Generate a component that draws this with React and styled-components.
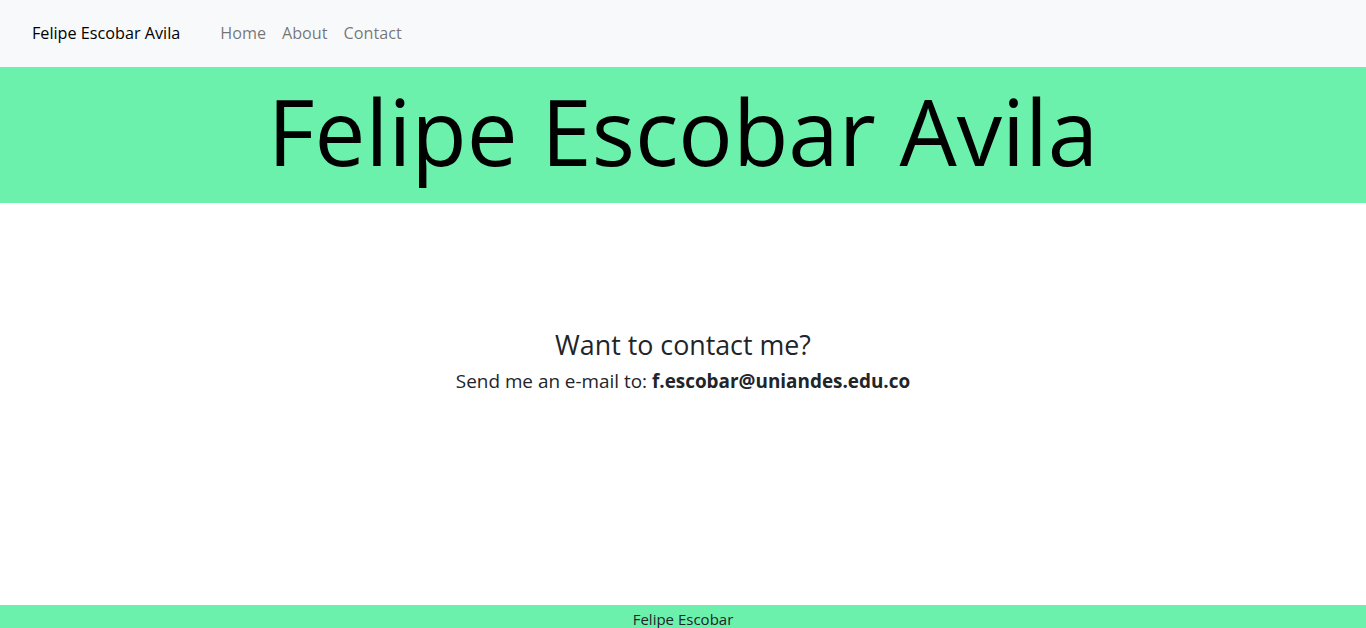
import React from "react";
import styled, { createGlobalStyle } from "styled-components";

const GlobalStyle = createGlobalStyle`
  body {
    margin: 0;
    font-family: "Open Sans", "Noto Sans", sans-serif;
    color: #212529;
    background-color: #fff;
  }
`;

const Page = styled.div`
  display: flex;
  flex-direction: column;
  min-height: 100vh;
`;

const Navbar = styled.nav`
  display: flex;
  align-items: center;
  height: 67px;
  padding: 0 32px 2px;
  box-sizing: border-box;
  background-color: #f8f9fa;
`;

const Brand = styled.a`
  font-size: 16.2px;
  color: #000;
  margin-right: 32px;
  text-decoration: none;
`;

const NavLink = styled.a`
  font-size: 16.2px;
  color: rgba(0, 0, 0, 0.55);
  padding: 0 8px;
  text-decoration: none;
`;

const Banner = styled.header`
  display: flex;
  justify-content: center;
  align-items: center;
  height: 136px;
  padding-bottom: 8px;
  box-sizing: border-box;
  background-color: #6cf1ac;
`;

const BannerTitle = styled.h1`
  margin: 0;
  font-weight: 400;
  font-size: 90.7px;
  line-height: 1;
  color: #000;
`;

const Main = styled.main`
  flex: 1;
  display: flex;
  flex-direction: column;
  align-items: center;
  padding-top: 126px;
`;

const Heading = styled.h3`
  margin: 0 0 7px;
  font-weight: 400;
  font-size: 26.8px;
  line-height: 1.2;
`;

const Lead = styled.p`
  margin: 0;
  font-size: 18.9px;
  font-weight: 400;

  strong {
    font-weight: 700;
  }
`;

const Footer = styled.footer`
  height: 23px;
  background-color: #6cf1ac;
  text-align: center;
  font-size: 15px;
  line-height: 28px;
  overflow: hidden;
`;

export default function App() {
  return (
    <Page>
      <GlobalStyle />
      <Navbar>
        <Brand href="#">Felipe Escobar Avila</Brand>
        <NavLink href="#">Home</NavLink>
        <NavLink href="#">About</NavLink>
        <NavLink href="#">Contact</NavLink>
      </Navbar>
      <Banner>
        <BannerTitle>Felipe Escobar Avila</BannerTitle>
      </Banner>
      <Main>
        <Heading>Want to contact me?</Heading>
        <Lead>
          Send me an e-mail to: <strong>f.escobar@uniandes.edu.co</strong>
        </Lead>
      </Main>
      <Footer>Felipe Escobar</Footer>
    </Page>
  );
}
